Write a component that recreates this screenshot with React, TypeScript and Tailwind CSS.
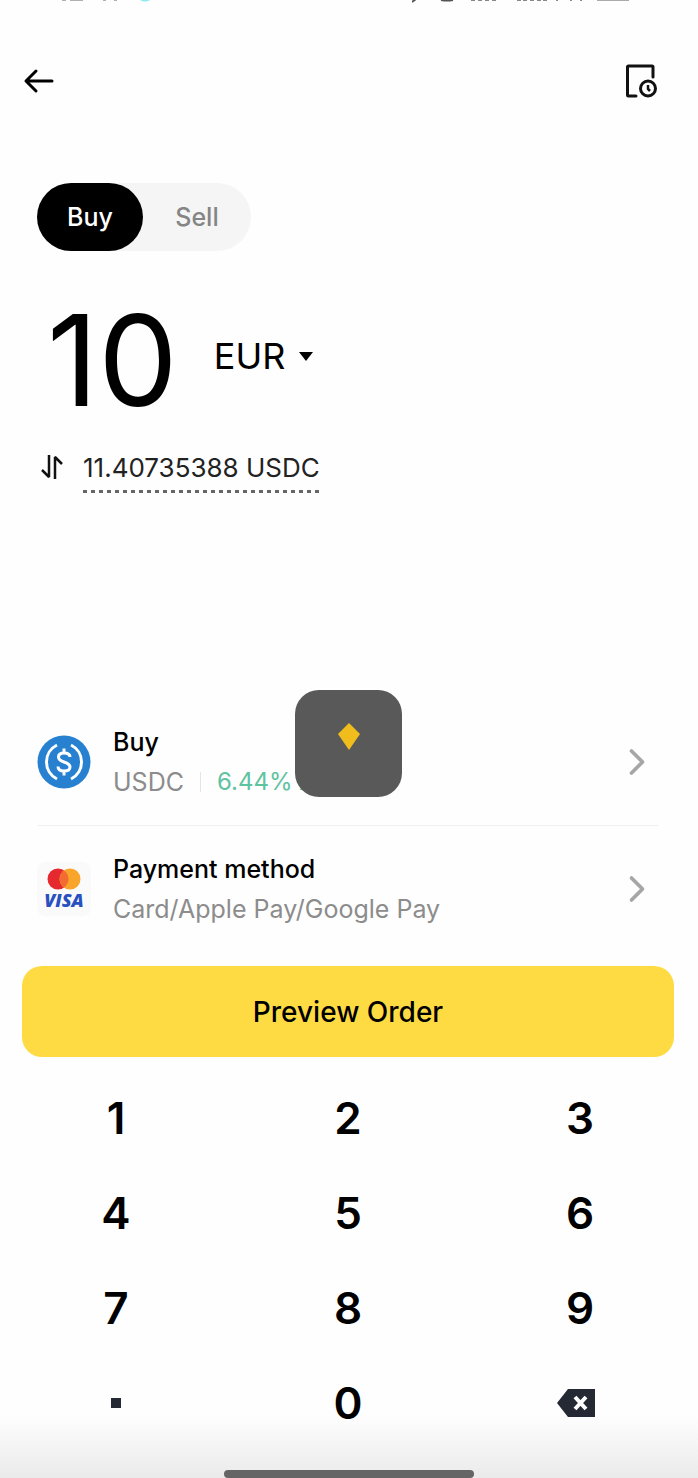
import { ChevronRight } from "lucide-react";

const KEYS = ["1", "2", "3", "4", "5", "6", "7", "8", "9"];

const StatusBar = () => (
  <div className="h-1 flex justify-between overflow-hidden pl-[60px] pr-[66px]">
    <svg width="96" height="4" fill="none" aria-hidden="true">
      <path d="M2 0h4M10 0h13M43 0h3M54 0h3" stroke="#b0b0b0" strokeWidth="2" />
      <path d="M80 0q5 3 10 0" fill="#8eeaf5" />
    </svg>
    <svg width="220" height="4" fill="none" aria-hidden="true">
      <path d="M0 2l4-3M29 0q6 1 12 0" stroke="#555" strokeWidth="2" />
      <path
        d="M59 0h4M66 0h4M73 0h4M80 0h4M105 0h4M111 0h4M118 0h4M125 0h4M131 0h4M144 0h2M158 0h2M168 0h2"
        stroke="#888"
        strokeWidth="2"
      />
      <path d="M185 0h32" stroke="#aaa" strokeWidth="2" />
    </svg>
  </div>
);

const BackIcon = () => (
  <svg width="38" height="38" viewBox="0 0 38 38" fill="none" aria-hidden="true">
    <path
      d="M32 19H7M16 9L6 19L16 29"
      stroke="#000"
      strokeWidth="3"
      strokeLinecap="round"
      strokeLinejoin="round"
    />
  </svg>
);

const HistoryIcon = () => (
  <svg width="36" height="36" viewBox="0 0 36 36" fill="none" aria-hidden="true">
    <path
      d="M12 33H4.5Q3.5 33 3.5 32V4Q3.5 3 4.5 3H28Q29 3 29 4V14"
      stroke="#111"
      strokeWidth="3"
      strokeLinecap="round"
    />
    <circle cx="24" cy="25.5" r="7.5" stroke="#111" strokeWidth="3" />
    <path d="M24 22V26L26 28" stroke="#111" strokeWidth="2.5" />
  </svg>
);

const SwapIcon = () => (
  <svg width="24" height="26" viewBox="0 0 24 26" fill="none" aria-hidden="true">
    <path
      d="M8 1V23L1 16M14 25V3L21 10"
      stroke="#111"
      strokeWidth="2.5"
      strokeLinejoin="bevel"
    />
  </svg>
);

const UsdcIcon = () => (
  <svg width="54" height="54" viewBox="0 0 54 54" fill="none" aria-hidden="true">
    <circle cx="27" cy="27" r="26.5" fill="#2780d0" />
    <path
      d="M20 10A19 19 0 0 0 20 44M34 10A19 19 0 0 1 34 44"
      stroke="#fff"
      strokeWidth="3"
    />
    <path
      d="M33 22C33 19 30 18 27 18C24 18 21.5 19 21.5 22C21.5 25 24 26 27 27C30 28 33 29 33 32C33 35 30.5 36 27 36C23.5 36 21 35 21 31.5M27 13.5V18M27 36V40.5"
      stroke="#fff"
      strokeWidth="3"
    />
  </svg>
);

const CardsIcon = () => (
  <div className="w-[54px] h-[54px] rounded-lg bg-[#fafafa] flex flex-col items-center pt-[6px]">
    <svg width="34" height="22" viewBox="0 0 34 22" aria-hidden="true">
      <circle cx="11" cy="11" r="10.5" fill="#e6292f" />
      <circle cx="23" cy="11" r="10.5" fill="#f9a52b" />
      <path d="M17 2.4A10.5 10.5 0 0 1 17 19.6A10.5 10.5 0 0 1 17 2.4" fill="#f26b30" />
    </svg>
    <span className="font-['Open_Sans',sans-serif] text-lg leading-5 font-extrabold italic text-[#2850c0]">
      VISA
    </span>
  </div>
);

const BackspaceIcon = () => (
  <svg width="38" height="28" viewBox="0 0 38 28" fill="none" aria-hidden="true">
    <path d="M0 14L11 0H38V28H11Z" fill="#252934" />
    <path d="M18 8L29 20M29 8L18 20" stroke="#fff" strokeWidth="4" />
  </svg>
);

const App = () => {
  return (
    <div className="relative bg-[#fefefe] font-[Inter,sans-serif] text-black">
      <StatusBar />

      <header className="flex items-center justify-between pl-5 pr-[38px] pt-[58px]">
        <button aria-label="Back">
          <BackIcon />
        </button>
        <button aria-label="Order history">
          <HistoryIcon />
        </button>
      </header>

      <section className="px-[37px] pt-[83px]">
        <div className="inline-flex h-[68px] rounded-full bg-[#f5f5f5] text-[25px] font-medium">
          <button className="w-[106px] rounded-full bg-black pt-[2px] text-white">Buy</button>
          <button className="w-[108px] pt-[2px] text-[#858585]">Sell</button>
        </div>

        <div className="mt-[45px] flex items-center gap-9 pl-[10px]">
          <span className="text-[126px] leading-[128px]">10</span>
          <button className="flex items-center gap-[14px] pb-2 text-4xl">
            EUR
            <svg width="14" height="9" viewBox="0 0 14 9" aria-hidden="true">
              <path d="M0 0H14L7 9Z" />
            </svg>
          </button>
        </div>

        <button className="mt-7 flex items-start gap-[18px] pl-1 text-[#222]">
          <span className="pt-[2px]">
            <SwapIcon />
          </span>
          <span>
            <span className="block text-[26px] leading-8">11.40735388 USDC</span>
            <span className="mt-[6px] block h-[3px] bg-[repeating-linear-gradient(90deg,#666_0_4px,transparent_4px_8px)]" />
          </span>
        </button>
      </section>

      <section className="mt-[206px] pl-[37px] pr-[39px]">
        <button className="flex w-full items-center border-b border-[#f1f1f1] h-[127px] text-left">
          <UsdcIcon />
          <span className="ml-[22px] flex-1">
            <span className="block text-[25px] leading-10 font-medium">Buy</span>
            <span className="flex items-center text-[25px] leading-10 text-[#8c8c8c]">
              USDC
              <span className="mx-4 h-5 w-px bg-[#e5e5e5]" />
              <span className="text-2xl leading-10 text-[#5fc3a0]">6.44% APR</span>
            </span>
          </span>
          <ChevronRight className="h-11 w-11 text-[#a6a6a6]" strokeWidth={2} />
        </button>
        <button className="flex w-full items-center h-[126px] text-left">
          <CardsIcon />
          <span className="ml-[22px] flex-1">
            <span className="block text-[25px] leading-10 font-medium">Payment method</span>
            <span className="block text-[25px] leading-10 text-[#8c8c8c]">
              Card/Apple Pay/Google Pay
            </span>
          </span>
          <ChevronRight className="h-11 w-11 text-[#a6a6a6]" strokeWidth={2} />
        </button>
      </section>

      <div className="pl-[22px] pr-6 pt-[14px]">
        <button className="h-[91px] w-full rounded-[20px] bg-[#fedb43] text-[28px] font-medium">
          Preview Order
        </button>
      </div>

      <footer className="bg-linear-to-b from-[#fefefe] from-85% to-[#eaeaea] pb-px">
        <div className="grid grid-cols-3 pr-[2px] pt-[13px] text-[44px] font-semibold">
          {KEYS.map((key) => (
            <button key={key} className="h-[95px]">
              {key}
            </button>
          ))}
          <button className="flex h-[95px] items-center justify-center" aria-label="Decimal point">
            <span className="h-[10px] w-[10px] bg-[#252934]" />
          </button>
          <button className="h-[95px]">0</button>
          <button
            className="flex h-[95px] items-center justify-center pr-2"
            aria-label="Delete"
          >
            <BackspaceIcon />
          </button>
        </div>
        <div className="mt-[20px] flex justify-center">
          <div className="h-2 w-[250px] rounded-full bg-[#656565]" />
        </div>
      </footer>

      {/* loading overlay */}
      <div
        role="status"
        aria-label="Loading"
        className="absolute left-1/2 top-[690px] -ml-[54px] flex h-[107px] w-[107px] justify-center rounded-3xl bg-[#595959] pt-[33px]"
      >
        <svg width="22" height="27" viewBox="0 0 22 27" aria-hidden="true">
          <path d="M11 0L22 11L11 27L0 11Z" fill="#f0bd1c" />
        </svg>
      </div>
    </div>
  );
};

export default App;
